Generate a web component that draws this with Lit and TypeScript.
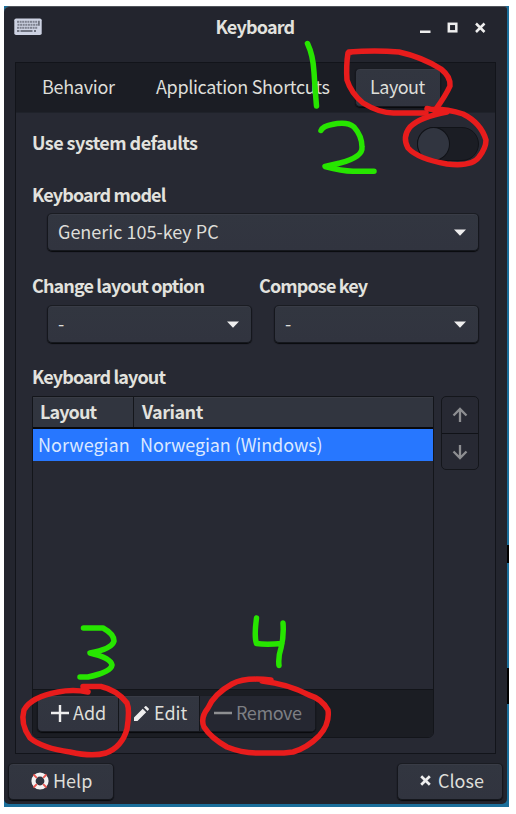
import { LitElement, html, css, svg } from "lit";
import { customElement } from "lit/decorators.js";

const caret = html`<svg class="caret" width="12" height="7" viewBox="0 0 12 7"><path d="M0 .4H12L6 6.8Z" fill="#eee"/></svg>`;

const keyRows = [0, 1, 2].map((r) =>
  [0, 1, 2, 3, 4, 5, 6, 7].map(
    (c) => svg`<rect x=${3 + c * 2.6 + (r % 2) * 0.5} y=${2.8 + r * 3} width="2" height="2" fill="#7e8290"/>`
  )
);

@customElement("app-root")
export class AppRoot extends LitElement {
  static styles = css`
    :host { display: block; width: 516px; height: 814px; position: relative; overflow: hidden; background: #fff;
      font: 18px/26px "Noto Sans CJK SC", "Noto Sans", sans-serif; color: #deded9; }
    * { box-sizing: border-box; }
    svg { display: block; flex: none; }
    .screen { margin: 6px 0 0 4px; width: 505px; height: 801px; background: #1b6f9b; display: flex; position: relative; }
    .notch { position: absolute; right: 0; width: 2px; background: #000; }
    .n1 { top: 539px; height: 18px; }
    .n2 { top: 662px; height: 36px; }
    .window { width: 503px; height: 798px; background: #23252e; border-top: 1px solid #50545b; border-radius: 6px 3px 5px 5px;
      display: flex; flex-direction: column; }
    .title { height: 55px; display: grid; grid-template-columns: 1fr auto 1fr; align-items: start; padding: 6px 21px 0 10px; }
    .title b { line-height: 26px; margin-left: 10px; letter-spacing: -.8px; }
    .title .kbd { margin-top: 5px; }
    .controls { justify-self: end; margin-top: 9px; }
    .frame { margin-left: 11px; width: 481px; height: 692px; border: 1px solid #12141a; background: #272933; }
    .tabs { height: 50px; background: #1b1d24; padding: 5px 0 0 26px; display: flex; border-bottom: 1px solid #1f222a; }
    .tab { line-height: 36px; white-space: nowrap; letter-spacing: -.3px; width: 114px; }
    .tab.app { width: 199px; letter-spacing: -.35px; }
    .tab.on { width: 86px; height: 39px; padding-left: 14px; letter-spacing: -.5px; line-height: 34px; }
    .btn { background: linear-gradient(#323640, #31343f); border: 1px solid #15171d; border-top-color: #1a1c22;
      border-radius: 5px; box-shadow: inset 0 1px #393c46, 0 1px 1px #08090c; }
    .body { padding: 0 16px; }
    .row { display: flex; justify-content: space-between; }
    .head { height: 51px; padding-top: 14px; }
    .head b { padding-top: 2px; letter-spacing: -.55px; }
    b { font-weight: 700; white-space: nowrap; color: #e2e2de; display: block; letter-spacing: -.87px; }
    .toggle { width: 62px; height: 34px; border-radius: 17px; background: #1b1d24; border: 1px solid #111318; }
    .knob { width: 31px; height: 32px; border-radius: 50%; background: #313540; box-shadow: 0 0 0 1px #101217; }
    .model { margin-top: 17px; }
    .combo { display: flex; align-items: center; justify-content: space-between; height: 38px; padding: 0 12px 0 10px; line-height: 34px; }
    .combo span { margin-top: -3px; }
    .combo.wide { margin: 6px 0 0 15px; }
    .pair { display: grid; grid-template-columns: 227px 220px; margin-top: 21px; }
    .pair .combo { margin: 7px 0 0 15px; }
    .pair .combo { width: 205px; }
    .lay { margin-top: 20px; }
    .lists { display: flex; justify-content: space-between; margin-top: 7px; }
    .list { width: 402px; height: 342px; border: 1px solid #13151a; border-radius: 0 0 6px 6px; background: #272933; overflow: hidden;
      display: flex; flex-direction: column; }
    .cols { display: grid; grid-template-columns: 100px 1fr; height: 32px; background: #31353f; border-bottom: 2px solid #08090c; box-shadow: inset 0 1px #393c45; }
    .cols b { line-height: 28px; padding-left: 7px; }
    .cols b + b { border-left: 1px solid #14161b; padding-left: 8px; letter-spacing: -.5px; }
    .item { height: 32px; background: #2777ff; color: #dbe8ff; display: grid; grid-template-columns: 101px 1fr; line-height: 30px; white-space: nowrap; }
    .item span { padding-left: 5px; }
    .item span + span { padding-left: 6px; letter-spacing: -.1px; }
    .void { flex: 1; }
    .tools { height: 48px; background: #1b1d23; border-top: 1px solid #121419; padding: 5px 4px; }
    .group { display: flex; width: 279px; height: 37px; overflow: hidden; }
    .tool { display: flex; align-items: center; gap: 4px; padding-left: 13px; width: 81px; border-right: 1px solid #14161b; line-height: 32px; }
    .tool span, .foot span { margin-top: -3px; }
    .tool.edit { padding-left: 15px; gap: 5px; }
    .tool.remove { background: #252731; color: #7d7f84; flex: 1; border-right: 0; box-shadow: none; padding-left: 14px; letter-spacing: -.4px; }
    .arrows { width: 38px; height: 74px; border: 1px solid #14161b; border-radius: 5px; display: grid; grid-template-rows: 36px 36px; }
    .arrows div { display: grid; place-items: center; }
    .arrows div + div { border-top: 1px solid #101217; }
    .foot { display: flex; justify-content: space-between; padding: 9px 4px 0; }
    .foot .btn { width: 106px; height: 37px; display: flex; align-items: center; line-height: 34px; padding-left: 22px; gap: 4px; }
    .foot .close { padding-left: 22px; gap: 7px; }
    .foot svg { margin-top: -2px; }
    .ink { position: absolute; left: 0; top: 0; fill: none; stroke-linecap: round; stroke-linejoin: round; }
  `;

  render() {
    return html`
      <div class="screen">
        <div class="notch n1"></div><div class="notch n2"></div>
        <div class="window">
          <div class="title">
            <svg class="kbd" width="28" height="18" viewBox="0 0 28 18">
              <rect x=".3" y=".5" width="27.4" height="16.5" rx="1.8" fill="#cdd2e2"/>
              ${keyRows}
              <path d="M3 12h2.400v2H3zM6.500 12h12v2h-12zM20 12h2v2h-2zM24 2.800h1.800v5H24z" fill="#6f7380"/>
            </svg>
            <b>Keyboard</b>
            <svg class="controls" width="66" height="12" viewBox="0 0 66 12">
              <path d="M0 8.5h10.5V11H0z" fill="#eee"/>
              <rect x="28.800" y="1.8" width="7.500" height="7.500" fill="none" stroke="#eee" stroke-width="2.5"/>
              <path d="M56 1.500l8.500 8.500M64.500 1.500L56 10" stroke="#eee" stroke-width="2.500"/>
            </svg>
          </div>
          <div class="frame">
            <div class="tabs">
              <div class="tab">Behavior</div>
              <div class="tab app">Application Shortcuts</div>
              <div class="tab on btn">Layout</div>
            </div>
            <div class="body">
              <div class="row head"><b>Use system defaults</b><div class="toggle"><div class="knob"></div></div></div>
              <b class="model">Keyboard model</b>
              <div class="combo btn wide"><span>Generic 105-key PC</span>${caret}</div>
              <div class="pair">
                <div class="first"><b>Change layout option</b><div class="combo btn"><span>-</span>${caret}</div></div>
                <div class="second"><b>Compose key</b><div class="combo btn"><span>-</span>${caret}</div></div>
              </div>
              <b class="lay">Keyboard layout</b>
              <div class="lists">
                <div class="list">
                  <div class="cols"><b>Layout</b><b>Variant</b></div>
                  <div class="item"><span>Norwegian</span><span>Norwegian (Windows)</span></div>
                  <div class="void"></div>
                  <div class="tools"><div class="group btn">
                    <div class="tool"><svg width="18" height="18" viewBox="0 0 18 18"><path d="M0 8h18M9 -1v18" stroke="#eee" stroke-width="2.4"/></svg><span>Add</span></div>
                    <div class="tool edit"><svg width="15" height="15" viewBox="0 0 15 15"><path d="M0 15v-3.500L8.700 2.800l3.500 3.500L3.500 15zM10 1.500L11.200.3q.6-.5 1.200 0l2.300 2.300q.5.6 0 1.200L13.500 5z" fill="#eee"/></svg><span>Edit</span></div>
                    <div class="tool remove"><svg width="18" height="18" viewBox="0 0 18 18"><path d="M0 8h18" stroke="#8e8f92" stroke-width="2.4"/></svg><span>Remove</span></div>
                  </div></div>
                </div>
                <div class="arrows">
                  <div><svg width="16" height="16" viewBox="0 0 16 16"><path d="M8 15V2M1.500 8.500L8 2l6.500 6.500" fill="none" stroke="#8d8e91" stroke-width="2.300"/></svg></div>
                  <div><svg width="16" height="16" viewBox="0 0 16 16"><path d="M8 1v13M1.500 7.500L8 14l6.500-6.500" fill="none" stroke="#8d8e91" stroke-width="2.300"/></svg></div>
                </div>
              </div>
            </div>
          </div>
          <div class="foot">
            <div class="btn"><svg width="18" height="18" viewBox="0 0 18 18"><circle cx="9" cy="9" r="6.500" fill="none" stroke="#f3f3f3" stroke-width="4.200"/><path d="M2.500 2.500l3.300 3.300M15.500 2.500l-3.300 3.300M2.500 15.500l3.300-3.300M15.500 15.500l-3.300-3.300" stroke="#ea5a54" stroke-width="1.900"/></svg><span>Help</span></div>
            <div class="btn close"><svg width="11" height="11" viewBox="0 0 11 11"><path d="M1.200 1.200l8.600 8.600M9.800 1.200L1.200 9.800" stroke="#eee" stroke-width="2.700"/></svg><span>Close</span></div>
          </div>
        </div>
      </div>
      <svg class="ink" width="516" height="814" viewBox="0 0 516 814">
        <g stroke="#27e500" stroke-width="5.500">
          <path d="M307.500 43.500Q313 55 314 72T316.500 106"/>
          <path d="M321 130.500Q323 126 332 124.500Q347 121 354 127Q362 136 362 147Q363 157 340 163L325 166.500Q342 171 353 171.300L374 171.300"/>
          <path d="M83.500 628H103Q114 634 114 641Q112 649 90 653Q111 658 112 665Q111 672 88 677H80"/>
          <path d="M256.500 618Q254 637 256.500 643.500Q266 645 282 643.500M283 623Q284 636 281 648Q278 657 279 665.500"/>
        </g>
        <g stroke="#e81c1c" stroke-width="5.500">
          <path d="M352 52L348 53Q346 65 347 80Q351 93 363 103Q381 114 396 113H426M349 52Q375 50 399 52Q422 57 441 69Q451 77 450 86Q446 95 436 109"/>
          <path d="M427 108.500L447 112Q420 117 410 127Q402 137 408 148Q418 159 447 164Q472 167 479 157Q486 148 486 140Q481 123 463 114Q449 109 430 109"/>
          <path d="M83 686.500H101Q117 690 127 703Q130 710 127 729Q122 747 106 753Q92 757 70 752Q42 748 30 738Q20 724 24 710Q31 697 58 692Q73 689 88 692"/>
          <path d="M271 680Q245 677 232 684Q214 694 208 708Q200 718 204 727Q211 738 227 747Q242 753 258 753H284L293 752Q307 748 319 736Q330 724 328 710Q322 699 309 695Q288 684 262 681"/>
        </g>
      </svg>`;
  }
}
